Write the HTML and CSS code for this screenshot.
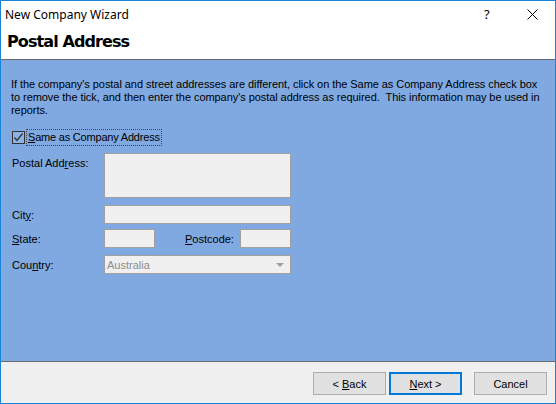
FILE: index.html
```html
<!DOCTYPE html>
<html lang="en">
<head>
	<meta charset="UTF-8">
	<title>New Company Wizard</title>
	<link rel="stylesheet" href="styles.css">
</head>
<body>
	<div class="window">
		<!-- 标题栏 + 页头 -->
		<div class="header">
			<div class="titlebar">
				<span class="title">New Company Wizard</span>
				<span class="help">?</span>
				<span class="close">
					<svg width="11" height="11" viewBox="0 0 11 11"><path d="M0.5 0.5 L10.5 10.5 M10.5 0.5 L0.5 10.5" stroke="#000" stroke-width="1" fill="none"/></svg>
				</span>
			</div>
			<h1 class="heading">Postal Address</h1>
		</div>
		<!-- 内容 -->
		<div class="content">
			<p class="intro">If the company's postal and street addresses are different, click on the Same as Company Address check box to remove the tick, and then enter the company's postal address as required.&nbsp; This information may be used in reports.</p>
			<div class="check">
				<span class="box">
					<svg width="11" height="11" viewBox="0 0 11 11"><path d="M1.5 5.5 L4 8.5 L9.5 1.5" stroke="#333" stroke-width="1.3" fill="none"/></svg>
				</span>
				<span class="check-label"><u>S</u>ame as Company Address</span>
			</div>
			<div class="form">
				<div class="row row-top">
					<label>Postal Add<u>r</u>ess:</label>
					<div class="field area"></div>
				</div>
				<div class="row r-city">
					<label>Cit<u>y</u>:</label>
					<div class="field wide"></div>
				</div>
				<div class="row r-state">
					<label><u>S</u>tate:</label>
					<div class="field short"></div>
					<label class="pc"><u>P</u>ostcode:</label>
					<div class="field short"></div>
				</div>
				<div class="row r-country">
					<label>Cou<u>n</u>try:</label>
					<div class="field wide combo">
						<span>Australia</span>
						<span class="arrow"></span>
					</div>
				</div>
			</div>
		</div>
		<!-- 按钮 -->
		<div class="footer">
			<div class="btn"><span>&lt; <u>B</u>ack</span></div>
			<div class="btn default"><span><u>N</u>ext &gt;</span></div>
			<div class="btn cancel"><span>Cancel</span></div>
		</div>
	</div>
</body>
</html>
```

FILE: styles.css
```css
body {
	margin: 0;
	padding: 0;
	background-color: #FFF;
	font-family: "Liberation Sans", Arial, sans-serif;
	font-size: 11px;
	color: #000;
}

.window {
	width: 556px;
	height: 404px;
	box-sizing: border-box;
	border: 1px solid #1883D7;
	display: flex;
	flex-direction: column;
}

.header {
	height: 58px;
	background-color: #FFF;
	border-bottom: 1px solid #696969;
}

.titlebar {
	height: 26px;
	display: flex;
	align-items: center;
	font-family: "Noto Sans", sans-serif;
	font-size: 12px;
}

.title {
	flex: 1;
	padding-left: 4px;
}

.help {
	width: 12px;
	margin-right: 31px;
	font-size: 13px;
}

.close {
	width: 11px;
	margin-right: 17px;
	display: flex;
}

.heading {
	margin: 0;
	padding: 5px 0 0 6px;
	font-family: "DejaVu Sans", sans-serif;
	font-size: 16px;
	font-weight: bold;
	letter-spacing: -0.9px;
}

.content {
	flex: 1;
	background-color: #7FA9E0;
	padding: 18px 12px 0 10px;
}

.intro {
	margin: 0;
	line-height: 13px;
	letter-spacing: -0.06px;
}

.check {
	display: flex;
	align-items: center;
	margin-top: 12px;
	margin-left: 1px;
}

.box {
	width: 11px;
	height: 11px;
	border: 1px solid #333;
	background-color: #8CB3E6;
	display: flex;
}

.check-label {
	margin-left: 1px;
	padding: 1px 1px 2px 1px;
	border: 1px dotted #444;
	letter-spacing: -0.2px;
}

.form {
	margin-top: 7px;
}

.row {
	display: flex;
	align-items: center;
}

.row label {
	width: 92px;
	padding-left: 1px;
}

.row-top {
	align-items: flex-start;
}

.row-top label {
	padding-top: 4px;
}

.r-city {
	margin-top: 7px;
}

.r-state {
	margin-top: 5px;
}

.r-country {
	margin-top: 7px;
}

.field {
	box-sizing: border-box;
	height: 19px;
	border: 1px solid #A0A0A0;
	background-color: #F0F0F0;
}

.area {
	width: 187px;
	height: 45px;
}

.wide {
	width: 187px;
}

.short {
	width: 51px;
}

.row .pc {
	width: 55px;
	padding-left: 30px;
}

.combo {
	display: flex;
	align-items: center;
	justify-content: space-between;
	padding: 0 6px 0 2px;
	color: #8C8C8C;
}

.arrow {
	width: 0;
	height: 0;
	border-left: 4px solid transparent;
	border-right: 4px solid transparent;
	border-top: 4px solid #A0A0A0;
}

.footer {
	height: 42px;
	box-sizing: border-box;
	border-top: 1px solid #696969;
	background-color: #F0F0F0;
	display: flex;
	justify-content: flex-end;
	padding-top: 10px;
	padding-right: 8px;
}

.btn {
	box-sizing: border-box;
	width: 73px;
	height: 23px;
	border: 1px solid #ADADAD;
	background-color: #E1E1E1;
	display: flex;
	align-items: center;
	justify-content: center;
	margin-left: 3px;
}

.default {
	border: 2px solid #0078D7;
}

.cancel {
	margin-left: 12px;
}
```
